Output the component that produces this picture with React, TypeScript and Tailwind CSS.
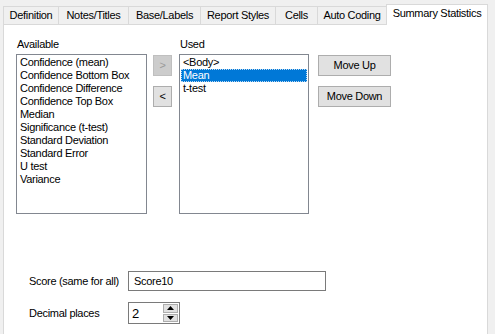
import React from "react"

const tabs = [
  { label: "Definition", w: "w-[55px]" },
  { label: "Notes/Titles", w: "w-[70px]" },
  { label: "Base/Labels", w: "w-[72px]" },
  { label: "Report Styles", w: "w-[75px]" },
  { label: "Cells", w: "w-[42px]" },
  { label: "Auto Coding", w: "w-[69px]" },
]

const available = [
  "Confidence (mean)",
  "Confidence Bottom Box",
  "Confidence Difference",
  "Confidence Top Box",
  "Median",
  "Significance (t-test)",
  "Standard Deviation",
  "Standard Error",
  "U test",
  "Variance",
]

const used = ["<Body>", "Mean", "t-test"]

const ListBox = ({ items, selected, width }: { items: string[]; selected?: string; width: string }) => {
  return (
    <div className={`${width} h-[160px] mt-[3px] border border-[#828790] bg-white p-[1px]`}>
      {items.map((item) =>
        item === selected ? (
          <div
            key={item}
            className="h-[13px] leading-[11px] px-[1px] bg-[#0078d7] text-white border border-dotted border-[#bcd9f2]"
          >
            {item}
          </div>
        ) : (
          <div key={item} className="h-[13px] leading-[13px] px-[2px] whitespace-nowrap">
            {item}
          </div>
        )
      )}
    </div>
  )
}

const Arrow = ({ up }: { up?: boolean }) => (
  <svg width="7" height="4" viewBox="0 0 7 4">
    {up ? <polygon points="0,4 7,4 3.5,0" fill="#000" /> : <polygon points="0,0 7,0 3.5,4" fill="#000" />}
  </svg>
)

export default function App() {
  return (
    <div
      className="w-[495px] h-[334px] bg-[#f0f0f0] flex flex-col overflow-hidden text-[11px] leading-[13px] text-black tracking-[-0.3px]"
      style={{ fontFamily: '"Liberation Sans", Arial, sans-serif' }}
    >
      {/* tab strip */}
      <div className="ml-[3px] mt-[4px] h-[20px] flex items-end">
        {tabs.map((t) => (
          <div
            key={t.label}
            className={`${t.w} h-[18px] border-l border-t border-[#d9d9d9] bg-[#f0f0f0] flex items-center justify-center whitespace-nowrap`}
          >
            {t.label}
          </div>
        ))}
        <div className="w-[102px] h-[21px] -mb-px z-10 border-l border-t border-r border-[#d9d9d9] bg-white flex justify-center pt-[2px] whitespace-nowrap">
          Summary Statistics
        </div>
      </div>

      {/* panel */}
      <div className="ml-[3px] w-[485px] flex-1 border-l border-r border-t border-[#d9d9d9] bg-white pl-[12px] pt-[13px]">
        <div className="flex">
          <div>
            <div className="pl-[1px]">Available</div>
            <ListBox items={available} width="w-[131px]" />
          </div>

          <div className="ml-[6px] pt-[17px] flex flex-col gap-[10px]">
            <button className="w-[19px] h-[21px] bg-[#cccccc] border border-[#bfbfbf] text-[#9a9a9a] flex items-center justify-center">
              &gt;
            </button>
            <button className="w-[19px] h-[21px] bg-[#e1e1e1] border border-[#adadad] flex items-center justify-center">
              &lt;
            </button>
          </div>

          <div className="ml-[7px]">
            <div className="pl-[1px]">Used</div>
            <ListBox items={used} selected="Mean" width="w-[130px]" />
          </div>

          <div className="ml-[9px] pt-[17px] flex flex-col gap-[10px]">
            <button className="w-[73px] h-[21px] bg-[#e1e1e1] border border-[#adadad] flex items-center justify-center">
              Move Up
            </button>
            <button className="w-[73px] h-[21px] bg-[#e1e1e1] border border-[#adadad] flex items-center justify-center">
              Move Down
            </button>
          </div>
        </div>

        <div className="ml-[13px] mt-[57px] flex flex-col gap-[11px]">
          <div className="flex items-center">
            <div className="w-[99px]">Score (same for all)</div>
            <div className="w-[198px] h-[20px] border border-[#7a7a7a] bg-white pl-[5px] flex items-center">
              Score10
            </div>
          </div>
          <div className="flex items-center">
            <div className="w-[99px]">Decimal places</div>
            <div className="w-[52px] h-[22px] border border-[#7a7a7a] bg-white flex items-center justify-between">
              <span className="pl-[3px] text-[13px]">2</span>
              <div className="w-[17px] h-full flex flex-col p-[1px] gap-[1px]">
                <div className="flex-1 bg-[#e1e1e1] border border-[#adadad] flex items-center justify-center">
                  <Arrow up />
                </div>
                <div className="flex-1 bg-[#e1e1e1] border border-[#adadad] flex items-center justify-center">
                  <Arrow />
                </div>
              </div>
            </div>
          </div>
        </div>
      </div>
    </div>
  )
}
